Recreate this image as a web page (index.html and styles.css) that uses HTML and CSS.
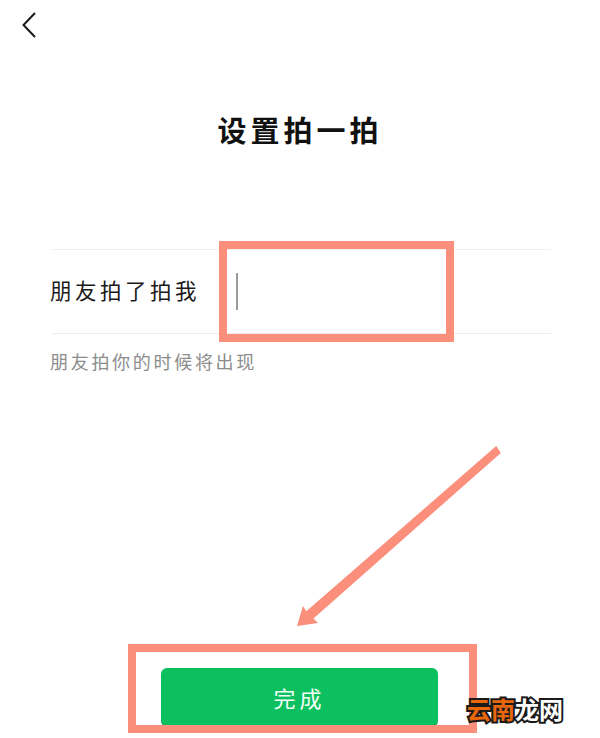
FILE: index.html
```html
<!DOCTYPE html>
<html lang="zh-CN">
<head>
  <meta charset="UTF-8">
  <title>设置拍一拍</title>
  <link rel="stylesheet" href="styles.css">
</head>
<body>
  <div class="screen">
    <!-- Back arrow -->
    <div class="topbar">
      <svg class="back-icon" width="16" height="28" viewBox="0 0 16 28">
        <path d="M14 2 L2.5 14 L14 26" fill="none" stroke="#1a1a1a" stroke-width="2"/>
      </svg>
    </div>

    <h1 class="title">设置拍一拍</h1>

    <div class="field">
      <span class="field-label">朋友拍了拍我</span>
      <span class="caret"></span>
    </div>
    <p class="hint">朋友拍你的时候将出现</p>

    <div class="footer">
      <button class="done-button">完成</button>
    </div>

    <!-- Annotations drawn over the screenshot -->
    <div class="mark mark-field"></div>
    <div class="mark mark-button"></div>
    <svg class="mark-arrow" width="600" height="738" viewBox="0 0 600 738">
      <polygon points="496.200,446.100 500.800,452.900 313.500,618.500 318,623 297,626 303,606 306.300,611.300" fill="#fc8e7c"/>
    </svg>
    <div class="watermark"><span class="wm-orange">云南</span><span class="wm-white">龙网</span></div>
  </div>
</body>
</html>
```
FILE: styles.css
```css
/* Page reset */
body {
  margin: 0;
  padding: 0;
  background: #ffffff;
}

.screen {
  position: relative;
  width: 600px;
  height: 738px;
  overflow: hidden;
  display: flex;
  flex-direction: column;
  background: #ffffff;
  font-family: "Noto Sans CJK SC", "Liberation Sans", sans-serif;
}

.topbar {
  display: flex;
  padding: 11px 0 0 21px;
  height: 28px;
}

.title {
  margin: 68px 0 0;
  height: 44px;
  line-height: 44px;
  text-align: center;
  font-size: 29px;
  font-weight: 700;
  letter-spacing: 4px;
  color: #111111;
}

.field {
  display: flex;
  align-items: center;
  margin: 98px 49px 0 52px;
  height: 83px;
  border-top: 1px solid #f0f0f0;
  border-bottom: 1px solid #ececec;
}

.field-label {
  margin-left: -2px;
  padding-bottom: 4px;
  width: 186px;
  font-size: 21.500px;
  letter-spacing: 3.500px;
  color: #1a1a1a;
}

.caret {
  width: 2px;
  height: 37px;
  background: #9a9a9a;
}

.hint {
  margin: 14px 0 0 50px;
  font-size: 18px;
  line-height: 26px;
  letter-spacing: 2.700px;
  color: #8c8c8c;
}

.footer {
  display: flex;
  justify-content: center;
  margin-top: auto;
  padding: 0 1px 11px 0;
}

.done-button {
  width: 277px;
  height: 59px;
  padding: 0;
  border: 0;
  border-bottom: 2px solid #2a9a58;
  border-radius: 6px;
  background: #0cc060;
  color: #f2fff7;
  font-family: inherit;
  font-size: 22px;
  letter-spacing: 4px;
}

/* Salmon annotation frames */
.mark {
  position: absolute;
  box-sizing: border-box;
  border: 8px solid #fc8e7c;
}

.mark-field {
  left: 219px;
  top: 241px;
  width: 235px;
  height: 101px;
}

.mark-button {
  left: 128px;
  top: 644px;
  width: 349px;
  height: 89px;
}

.mark-arrow {
  position: absolute;
  left: 0;
  top: 0;
}

.watermark {
  position: absolute;
  left: 467px;
  top: 692px;
  font-size: 24px;
  line-height: 34px;
  font-weight: 700;
  letter-spacing: 0;
  paint-order: stroke fill;
  -webkit-text-stroke: 4px #1a1a1a;
}

.wm-orange {
  color: #e8660c;
}

.wm-white {
  color: #ffffff;
}
```
